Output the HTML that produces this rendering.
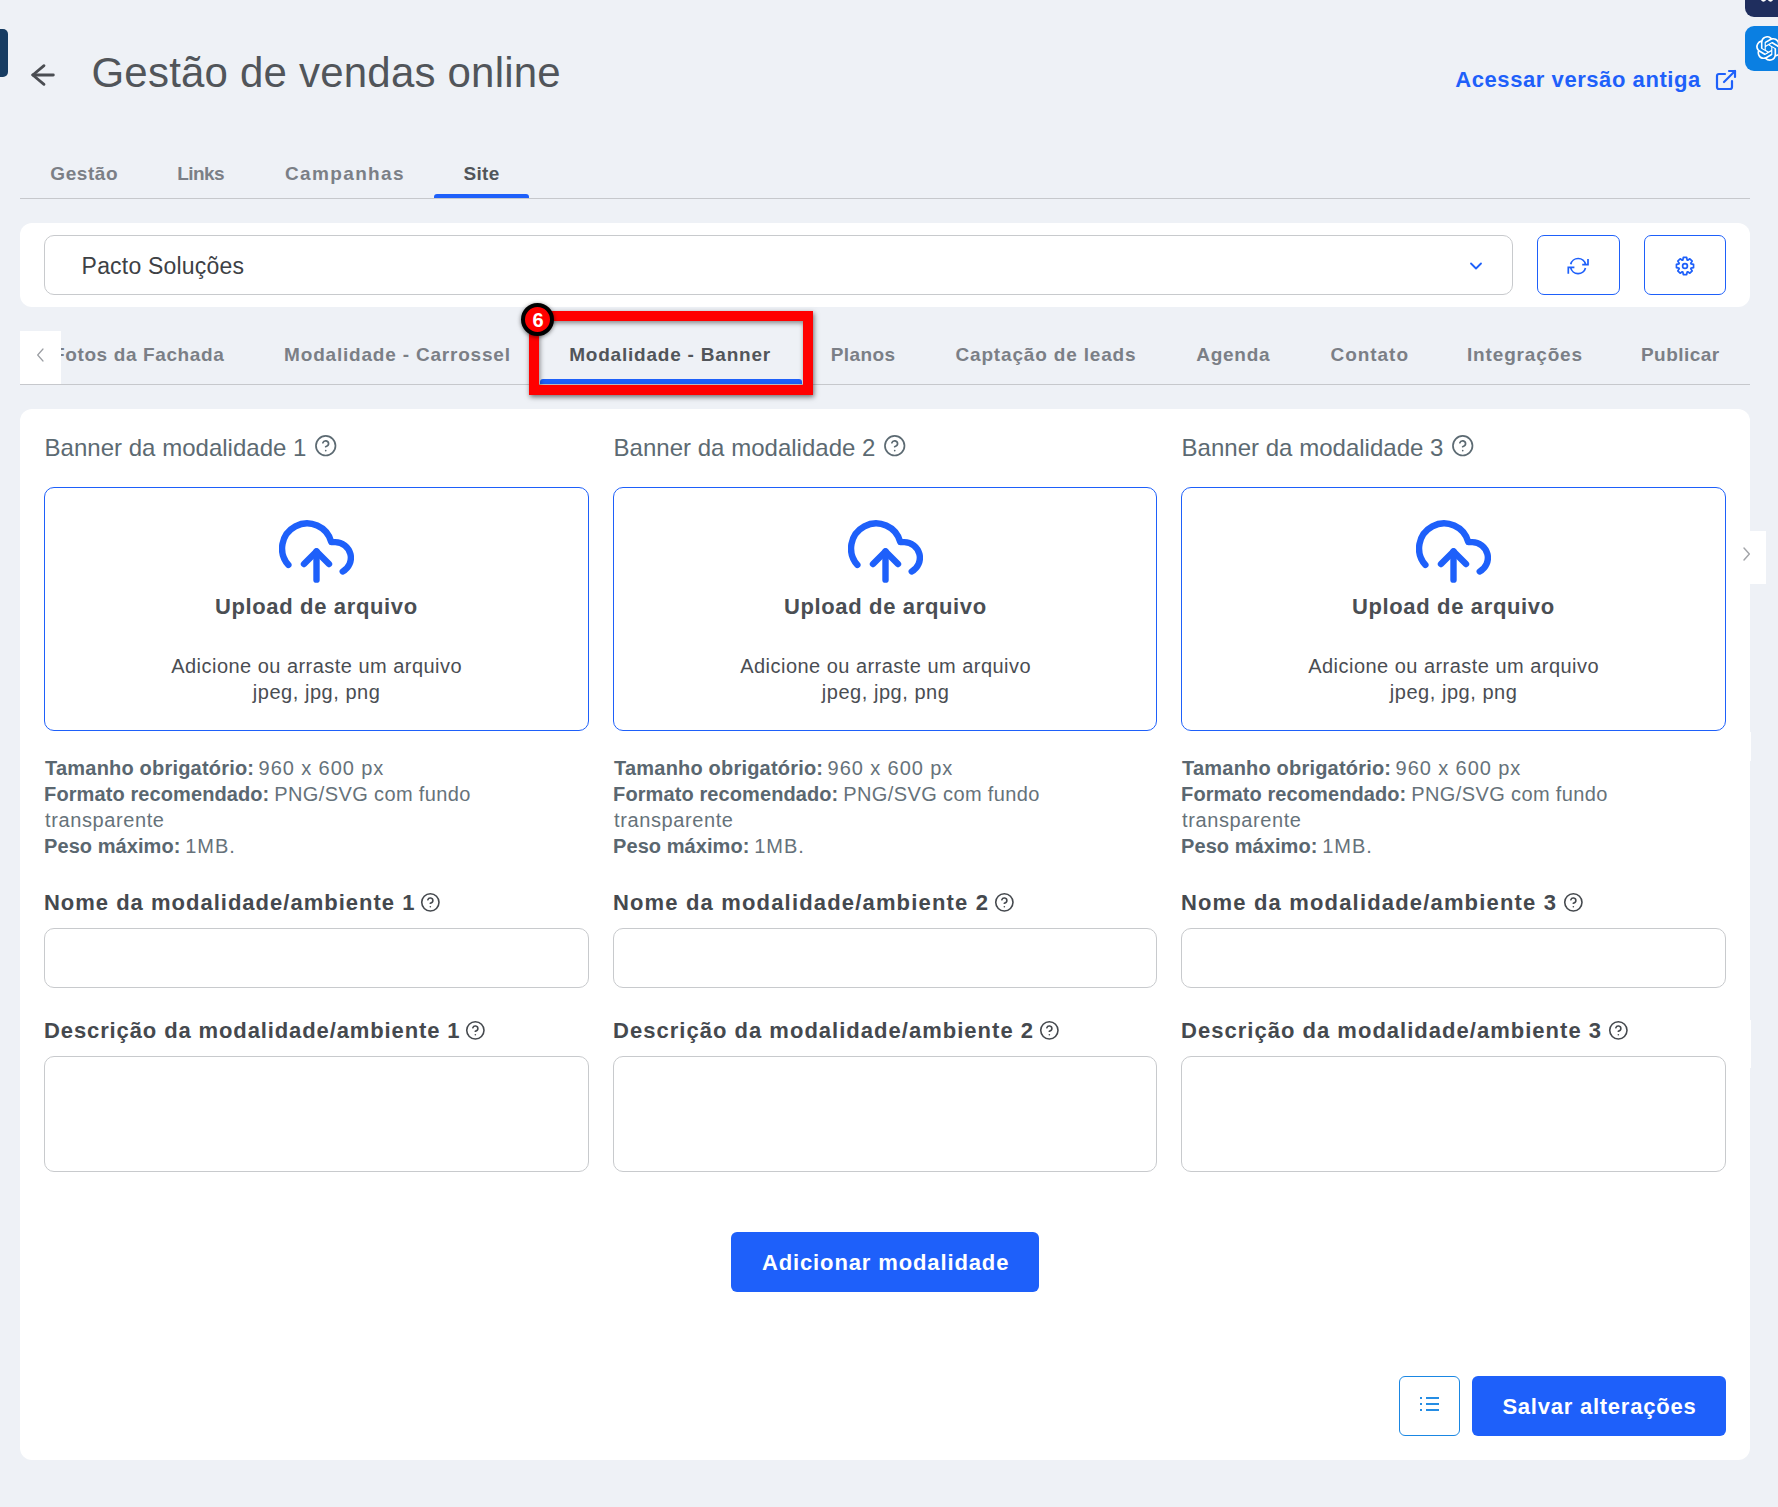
<!DOCTYPE html>
<html><head><meta charset="utf-8"><title>Gestão de vendas online</title>
<style>
html,body{margin:0;padding:0;}
body{width:1778px;height:1507px;overflow:hidden;background:#eef1f6;position:relative;font-family:"Liberation Sans",sans-serif;}
.a{position:absolute;box-sizing:content-box;}
.t{position:absolute;white-space:nowrap;line-height:1;font-family:"Liberation Sans",sans-serif;z-index:1}
</style></head><body>
<div class="a" style="left:-6px;top:29px;width:14px;height:48px;background:#173c62;border-radius:5px"></div>
<div class="a" style="left:1745px;top:-10px;width:50px;height:27px;background:#1f2e5e;border-radius:9px"></div>
<svg class="a" style="left:1759px;top:-6px" width="16" height="11" viewBox="0 0 16 11" fill="none" stroke="#fff" stroke-width="2.2" stroke-linecap="round"><path d="M2 1c0 5 2.5 8 5 3M14 1c0 5-2.5 8-5 3M7 4c.5 1 1.5 1 2 0"/></svg>
<div class="a" style="left:1745px;top:26px;width:50px;height:45px;background:#0a7fe2;border-radius:9px"></div>
<svg class="a" style="left:1755.5px;top:35.5px" width="25" height="25" viewBox="0 0 24 24"><path fill="#fff" d="M22.2819 9.8211a5.9847 5.9847 0 0 0-.5157-4.9108 6.0462 6.0462 0 0 0-6.5098-2.9A6.0651 6.0651 0 0 0 4.9807 4.1818a5.9847 5.9847 0 0 0-3.9977 2.9 6.0462 6.0462 0 0 0 .7427 7.0966 5.98 5.98 0 0 0 .511 4.9107 6.051 6.051 0 0 0 6.5146 2.9001A5.9847 5.9847 0 0 0 13.2599 24a6.0557 6.0557 0 0 0 5.7718-4.2058 5.9894 5.9894 0 0 0 3.9977-2.9001 6.0557 6.0557 0 0 0-.7475-7.0729zm-9.022 12.6081a4.4755 4.4755 0 0 1-2.8764-1.0408l.1419-.0804 4.7783-2.7582a.7948.7948 0 0 0 .3927-.6813v-6.7369l2.02 1.1686a.071.071 0 0 1 .038.052v5.5826a4.504 4.504 0 0 1-4.4945 4.4944zm-9.6607-4.1254a4.4708 4.4708 0 0 1-.5346-3.0137l.142.0852 4.783 2.7582a.7712.7712 0 0 0 .7806 0l5.8428-3.3685v2.3324a.0804.0804 0 0 1-.0332.0615L9.74 19.9502a4.4992 4.4992 0 0 1-6.1408-1.6464zM2.3408 7.8956a4.485 4.485 0 0 1 2.3655-1.9728V11.6a.7664.7664 0 0 0 .3879.6765l5.8144 3.3543-2.0201 1.1685a.0757.0757 0 0 1-.071 0l-4.8303-2.7865A4.504 4.504 0 0 1 2.3408 7.872zm16.5963 3.8558L13.1038 8.364 15.1192 7.2a.0757.0757 0 0 1 .071 0l4.8303 2.7913a4.4944 4.4944 0 0 1-.6765 8.1042v-5.6772a.79.79 0 0 0-.407-.667zm2.0107-3.0231l-.142-.0852-4.7735-2.7818a.7759.7759 0 0 0-.7854 0L9.409 9.2297V6.8974a.0662.0662 0 0 1 .0284-.0615l4.8303-2.7866a4.4992 4.4992 0 0 1 6.6802 4.66zM8.3065 12.863l-2.02-1.1638a.0804.0804 0 0 1-.038-.0567V6.0742a4.4992 4.4992 0 0 1 7.3757-3.4537l-.142.0805L8.704 5.459a.7948.7948 0 0 0-.3927.6813zm1.0976-2.3654l2.602-1.4998 2.6069 1.4998v2.9994l-2.5974 1.4997-2.6067-1.4997Z"/></svg>
<svg class="a" style="left:27.5px;top:58.5px" width="32" height="32" viewBox="0 0 24 24" fill="none" stroke="#4a4d52" stroke-width="2.1" stroke-linecap="round" stroke-linejoin="round"><line x1="19" y1="12" x2="3.6" y2="12"/><polyline points="12 19 3.6 12 12 5"/></svg>
<svg class="a" style="left:1714px;top:68px" width="24" height="24" viewBox="0 0 24 24" fill="none" stroke="#1e60fa" stroke-width="2.2" stroke-linecap="round" stroke-linejoin="round"><path d="M18 13v6a2 2 0 0 1-2 2H5a2 2 0 0 1-2-2V8a2 2 0 0 1 2-2h6"/><polyline points="15 3 21 3 21 9"/><line x1="10" y1="14" x2="21" y2="3"/></svg>
<div class="a" style="left:20px;top:198px;width:1730px;height:1px;background:#c6c8cc"></div>
<div class="a" style="left:434px;top:194px;width:95px;height:4px;background:#1e60fa;border-radius:3px 3px 0 0"></div>
<div class="a" style="left:20px;top:223px;width:1730px;height:84px;background:#fff;border-radius:12px"></div>
<div class="a" style="left:44px;top:235px;width:1467px;height:58px;border:1px solid #c8cacd;border-radius:10px;background:#fff"></div>
<svg class="a" style="left:1466px;top:256px" width="20" height="20" viewBox="0 0 24 24" fill="none" stroke="#1e60fa" stroke-width="2.2" stroke-linecap="round" stroke-linejoin="round"><polyline points="6 9 12 15 18 9"/></svg>
<div class="a" style="left:1537px;top:235px;width:81px;height:58px;border:1px solid #1e60fa;border-radius:7px"></div>
<div class="a" style="left:1644px;top:235px;width:80px;height:58px;border:1px solid #1e60fa;border-radius:7px"></div>
<svg class="a" style="left:1560px;top:250px" width="40" height="32" viewBox="0 0 40 32" fill="none" stroke="#1e60fa" stroke-width="1.7" stroke-linecap="butt" stroke-linejoin="miter"><path d="M10.73 14.26A7.6 7.6 0 0 1 25.53 14.52"/><polyline points="28 8.9 28 14.6 22.2 14.6"/><path d="M25.47 17.94A7.6 7.6 0 0 1 10.67 17.68"/><polyline points="8.3 23.7 8.3 17.3 14.4 17.3"/></svg>
<svg class="a" style="left:1673px;top:254.1px" width="24" height="24" viewBox="0 0 24 24" fill="none" stroke="#1e60fa" stroke-width="1.7" stroke-linecap="round" stroke-linejoin="round"><circle cx="12" cy="12" r="2.4"/><path d="M9.86 5.97 L10.34 3.46 L13.66 3.46 L14.14 5.97 L14.76 6.22 L16.86 4.79 L19.21 7.14 L17.78 9.24 L18.03 9.86 L20.54 10.34 L20.54 13.66 L18.03 14.14 L17.78 14.76 L19.21 16.86 L16.86 19.21 L14.76 17.78 L14.14 18.03 L13.66 20.54 L10.34 20.54 L9.86 18.03 L9.24 17.78 L7.14 19.21 L4.79 16.86 L6.22 14.76 L5.97 14.14 L3.46 13.66 L3.46 10.34 L5.97 9.86 L6.22 9.24 L4.79 7.14 L7.14 4.79 L9.24 6.22Z"/></svg>
<div class="a" style="left:20px;top:384px;width:1730px;height:1px;background:#c6c8cc"></div>
<div class="a" style="left:540px;top:379px;width:262px;height:5px;background:#1e60fa;border-radius:3px 3px 0 0"></div>
<div class="a" style="left:0px;top:330px;width:61px;height:54px;background:#eef1f6;z-index:2"></div>
<div class="a" style="left:20px;top:331px;width:41px;height:53px;background:#fff;z-index:2"></div>
<svg class="a" style="left:33px;top:347px;z-index:3" width="16" height="16" viewBox="0 0 24 24" fill="none" stroke="#9b9ea3" stroke-width="1.8" stroke-linecap="round" stroke-linejoin="round"><polyline points="15 3 7 12 15 21"/></svg>
<div class="a" style="left:529px;top:311px;width:264px;height:64px;border:10px solid #ff0000;box-shadow:1px 2px 5px rgba(0,0,0,.55), inset 1px 2px 5px rgba(0,0,0,.45);z-index:4"></div>
<div class="a" style="left:521px;top:303px;width:25px;height:25px;border:4px solid #000;background:#ff0000;border-radius:50%;z-index:5;box-shadow:0 1px 4px rgba(0,0,0,.55)"></div>
<div class="t" style="left:532.5px;top:310px;font-size:20px;font-weight:700;color:#fff;z-index:6;letter-spacing:0">6</div>
<div class="a" style="left:20px;top:409px;width:1730px;height:1051px;background:#fff;border-radius:12px"></div>
<div class="a" style="left:1750px;top:732px;width:1px;height:29px;background:#fff"></div>
<div class="a" style="left:1750px;top:1020px;width:1px;height:48px;background:#fff"></div>
<div class="a" style="left:1750px;top:531px;width:16px;height:53px;background:#fff"></div>
<svg class="a" style="left:1738px;top:546px" width="16" height="16" viewBox="0 0 24 24" fill="none" stroke="#a3a5a9" stroke-width="2.2" stroke-linecap="round" stroke-linejoin="round"><polyline points="9 3 17 12 9 21"/></svg>
<svg class="a" style="left:314.07px;top:434.27px" width="23.45" height="23.45" viewBox="0 0 24 24" fill="none" stroke="#5c6a72" stroke-width="1.74" stroke-linecap="round" stroke-linejoin="round"><circle cx="12" cy="12" r="10"/><path d="M9.09 9a3 3 0 0 1 5.83 1c0 2-3 3-3 3"/><line x1="12" y1="17" x2="12.01" y2="17"/></svg>
<div class="a" style="left:44px;top:487px;width:543px;height:242px;border:1px solid #1e60fa;border-radius:10px"></div>
<svg class="a" style="left:279px;top:513.7px" width="75" height="75" viewBox="0 0 24 24" fill="none" stroke="#1e60fa" stroke-width="2.05" stroke-linecap="round" stroke-linejoin="round"><polyline points="16 16 12 12 8 16"/><line x1="12" y1="12" x2="12" y2="21"/><path d="M20.39 18.39A5 5 0 0 0 18 9h-1.26A8 8 0 1 0 3 16.3"/></svg>
<svg class="a" style="left:420.34px;top:891.64px" width="20.73" height="20.73" viewBox="0 0 24 24" fill="none" stroke="#45494e" stroke-width="1.85" stroke-linecap="round" stroke-linejoin="round"><circle cx="12" cy="12" r="10"/><path d="M9.09 9a3 3 0 0 1 5.83 1c0 2-3 3-3 3"/><line x1="12" y1="17" x2="12.01" y2="17"/></svg>
<div class="a" style="left:44px;top:928px;width:543px;height:58px;border:1px solid #c8cacd;border-radius:10px"></div>
<svg class="a" style="left:465.04px;top:1020.24px" width="20.73" height="20.73" viewBox="0 0 24 24" fill="none" stroke="#45494e" stroke-width="1.85" stroke-linecap="round" stroke-linejoin="round"><circle cx="12" cy="12" r="10"/><path d="M9.09 9a3 3 0 0 1 5.83 1c0 2-3 3-3 3"/><line x1="12" y1="17" x2="12.01" y2="17"/></svg>
<div class="a" style="left:44px;top:1056px;width:543px;height:114px;border:1px solid #c8cacd;border-radius:10px"></div>
<svg class="a" style="left:883.07px;top:434.27px" width="23.45" height="23.45" viewBox="0 0 24 24" fill="none" stroke="#5c6a72" stroke-width="1.74" stroke-linecap="round" stroke-linejoin="round"><circle cx="12" cy="12" r="10"/><path d="M9.09 9a3 3 0 0 1 5.83 1c0 2-3 3-3 3"/><line x1="12" y1="17" x2="12.01" y2="17"/></svg>
<div class="a" style="left:613px;top:487px;width:542px;height:242px;border:1px solid #1e60fa;border-radius:10px"></div>
<svg class="a" style="left:848px;top:513.7px" width="75" height="75" viewBox="0 0 24 24" fill="none" stroke="#1e60fa" stroke-width="2.05" stroke-linecap="round" stroke-linejoin="round"><polyline points="16 16 12 12 8 16"/><line x1="12" y1="12" x2="12" y2="21"/><path d="M20.39 18.39A5 5 0 0 0 18 9h-1.26A8 8 0 1 0 3 16.3"/></svg>
<svg class="a" style="left:993.94px;top:891.64px" width="20.73" height="20.73" viewBox="0 0 24 24" fill="none" stroke="#45494e" stroke-width="1.85" stroke-linecap="round" stroke-linejoin="round"><circle cx="12" cy="12" r="10"/><path d="M9.09 9a3 3 0 0 1 5.83 1c0 2-3 3-3 3"/><line x1="12" y1="17" x2="12.01" y2="17"/></svg>
<div class="a" style="left:613px;top:928px;width:542px;height:58px;border:1px solid #c8cacd;border-radius:10px"></div>
<svg class="a" style="left:1038.64px;top:1020.24px" width="20.73" height="20.73" viewBox="0 0 24 24" fill="none" stroke="#45494e" stroke-width="1.85" stroke-linecap="round" stroke-linejoin="round"><circle cx="12" cy="12" r="10"/><path d="M9.09 9a3 3 0 0 1 5.83 1c0 2-3 3-3 3"/><line x1="12" y1="17" x2="12.01" y2="17"/></svg>
<div class="a" style="left:613px;top:1056px;width:542px;height:114px;border:1px solid #c8cacd;border-radius:10px"></div>
<svg class="a" style="left:1451.07px;top:434.27px" width="23.45" height="23.45" viewBox="0 0 24 24" fill="none" stroke="#5c6a72" stroke-width="1.74" stroke-linecap="round" stroke-linejoin="round"><circle cx="12" cy="12" r="10"/><path d="M9.09 9a3 3 0 0 1 5.83 1c0 2-3 3-3 3"/><line x1="12" y1="17" x2="12.01" y2="17"/></svg>
<div class="a" style="left:1181px;top:487px;width:543px;height:242px;border:1px solid #1e60fa;border-radius:10px"></div>
<svg class="a" style="left:1416px;top:513.7px" width="75" height="75" viewBox="0 0 24 24" fill="none" stroke="#1e60fa" stroke-width="2.05" stroke-linecap="round" stroke-linejoin="round"><polyline points="16 16 12 12 8 16"/><line x1="12" y1="12" x2="12" y2="21"/><path d="M20.39 18.39A5 5 0 0 0 18 9h-1.26A8 8 0 1 0 3 16.3"/></svg>
<svg class="a" style="left:1563.44px;top:891.64px" width="20.73" height="20.73" viewBox="0 0 24 24" fill="none" stroke="#45494e" stroke-width="1.85" stroke-linecap="round" stroke-linejoin="round"><circle cx="12" cy="12" r="10"/><path d="M9.09 9a3 3 0 0 1 5.83 1c0 2-3 3-3 3"/><line x1="12" y1="17" x2="12.01" y2="17"/></svg>
<div class="a" style="left:1181px;top:928px;width:543px;height:58px;border:1px solid #c8cacd;border-radius:10px"></div>
<svg class="a" style="left:1608.14px;top:1020.24px" width="20.73" height="20.73" viewBox="0 0 24 24" fill="none" stroke="#45494e" stroke-width="1.85" stroke-linecap="round" stroke-linejoin="round"><circle cx="12" cy="12" r="10"/><path d="M9.09 9a3 3 0 0 1 5.83 1c0 2-3 3-3 3"/><line x1="12" y1="17" x2="12.01" y2="17"/></svg>
<div class="a" style="left:1181px;top:1056px;width:543px;height:114px;border:1px solid #c8cacd;border-radius:10px"></div>
<div class="a" style="left:731px;top:1232px;width:308px;height:60px;background:#1e60fa;border-radius:6px;z-index:2"></div>
<div class="a" style="left:1399px;top:1376px;width:59px;height:58px;border:1px solid #1a87e3;border-radius:6px"></div>
<svg class="a" style="left:1418.3px;top:1392px" width="24" height="24" viewBox="0 0 24 24" fill="none" stroke="#1a87e3" stroke-width="1.9" stroke-linecap="butt"><line x1="8" y1="6" x2="21" y2="6"/><line x1="8" y1="12" x2="21" y2="12"/><line x1="8" y1="18" x2="21" y2="18"/><line x1="3" y1="5" x2="3" y2="7"/><line x1="3" y1="11" x2="3" y2="13"/><line x1="3" y1="17" x2="3" y2="19"/></svg>
<div class="a" style="left:1472px;top:1376px;width:254px;height:60px;background:#1e60fa;border-radius:6px;z-index:2"></div>
<div class="t" style="left:91.50px;top:51.90px;font-size:42px;font-weight:400;letter-spacing:0.204px;color:#51555a;z-index:1">Gestão de vendas online</div>
<div class="t" style="left:1455.30px;top:68.60px;font-size:22px;font-weight:700;letter-spacing:0.568px;color:#1e60fa;z-index:1">Acessar versão antiga</div>
<div class="t" style="left:50.30px;top:163.75px;font-size:19px;font-weight:700;letter-spacing:0.579px;color:#7b7f86;z-index:1">Gestão</div>
<div class="t" style="left:177.20px;top:163.75px;font-size:19px;font-weight:700;letter-spacing:-0.539px;color:#7b7f86;z-index:1">Links</div>
<div class="t" style="left:285.00px;top:163.75px;font-size:19px;font-weight:700;letter-spacing:1.358px;color:#7b7f86;z-index:1">Campanhas</div>
<div class="t" style="left:463.50px;top:163.75px;font-size:19px;font-weight:700;letter-spacing:0.307px;color:#51555a;z-index:1">Site</div>
<div class="t" style="left:81.60px;top:254.65px;font-size:23px;font-weight:400;letter-spacing:0.198px;color:#3d4145;z-index:1">Pacto Soluções</div>
<div class="t" style="left:53.00px;top:344.65px;font-size:19px;font-weight:700;letter-spacing:0.616px;color:#7b7f86;z-index:1">Fotos da Fachada</div>
<div class="t" style="left:284.10px;top:344.65px;font-size:19px;font-weight:700;letter-spacing:0.801px;color:#7b7f86;z-index:1">Modalidade - Carrossel</div>
<div class="t" style="left:569.20px;top:344.65px;font-size:19px;font-weight:700;letter-spacing:0.786px;color:#51555a;z-index:1">Modalidade - Banner</div>
<div class="t" style="left:830.80px;top:344.65px;font-size:19px;font-weight:700;letter-spacing:0.394px;color:#7b7f86;z-index:1">Planos</div>
<div class="t" style="left:955.50px;top:344.65px;font-size:19px;font-weight:700;letter-spacing:0.826px;color:#7b7f86;z-index:1">Captação de leads</div>
<div class="t" style="left:1196.30px;top:344.65px;font-size:19px;font-weight:700;letter-spacing:0.719px;color:#7b7f86;z-index:1">Agenda</div>
<div class="t" style="left:1330.50px;top:344.65px;font-size:19px;font-weight:700;letter-spacing:0.958px;color:#7b7f86;z-index:1">Contato</div>
<div class="t" style="left:1467.00px;top:344.65px;font-size:19px;font-weight:700;letter-spacing:0.841px;color:#7b7f86;z-index:1">Integrações</div>
<div class="t" style="left:1641.00px;top:344.65px;font-size:19px;font-weight:700;letter-spacing:0.446px;color:#7b7f86;z-index:1">Publicar</div>
<div class="t" style="left:44.60px;top:436.20px;font-size:24px;font-weight:400;letter-spacing:0.015px;color:#5c6a72;z-index:1">Banner da modalidade 1</div>
<div class="t" style="left:214.90px;top:596.30px;font-size:22px;font-weight:700;letter-spacing:0.646px;color:#4a4e53;z-index:1">Upload de arquivo</div>
<div class="t" style="left:171.20px;top:655.90px;font-size:20px;font-weight:400;letter-spacing:0.469px;color:#4a4d52;z-index:1">Adicione ou arraste um arquivo</div>
<div class="t" style="left:252.80px;top:682.00px;font-size:20px;font-weight:400;letter-spacing:0.533px;color:#4a4d52;z-index:1">jpeg, jpg, png</div>
<div class="t" style="left:45.10px;top:757.60px;font-size:20px;font-weight:700;letter-spacing:0.194px;color:#5a6770;z-index:1">Tamanho obrigatório:</div>
<div class="t" style="left:258.60px;top:757.60px;font-size:20px;font-weight:400;letter-spacing:0.924px;color:#66727a;z-index:1">960 x 600 px</div>
<div class="t" style="left:44.10px;top:783.60px;font-size:20px;font-weight:700;letter-spacing:0.095px;color:#5a6770;z-index:1">Formato recomendado:</div>
<div class="t" style="left:274.30px;top:783.60px;font-size:20px;font-weight:400;letter-spacing:0.378px;color:#66727a;z-index:1">PNG/SVG com fundo</div>
<div class="t" style="left:45.10px;top:809.70px;font-size:20px;font-weight:400;letter-spacing:0.593px;color:#66727a;z-index:1">transparente</div>
<div class="t" style="left:44.10px;top:835.60px;font-size:20px;font-weight:700;letter-spacing:0.060px;color:#5a6770;z-index:1">Peso máximo:</div>
<div class="t" style="left:185.30px;top:835.60px;font-size:20px;font-weight:400;letter-spacing:0.926px;color:#66727a;z-index:1">1MB.</div>
<div class="t" style="left:43.90px;top:891.50px;font-size:22px;font-weight:700;letter-spacing:1.008px;color:#45494e;z-index:1">Nome da modalidade/ambiente 1</div>
<div class="t" style="left:44.00px;top:1020.10px;font-size:22px;font-weight:700;letter-spacing:0.884px;color:#45494e;z-index:1">Descrição da modalidade/ambiente 1</div>
<div class="t" style="left:613.60px;top:436.20px;font-size:24px;font-weight:400;letter-spacing:0.015px;color:#5c6a72;z-index:1">Banner da modalidade 2</div>
<div class="t" style="left:783.90px;top:596.30px;font-size:22px;font-weight:700;letter-spacing:0.646px;color:#4a4e53;z-index:1">Upload de arquivo</div>
<div class="t" style="left:740.20px;top:655.90px;font-size:20px;font-weight:400;letter-spacing:0.469px;color:#4a4d52;z-index:1">Adicione ou arraste um arquivo</div>
<div class="t" style="left:821.80px;top:682.00px;font-size:20px;font-weight:400;letter-spacing:0.533px;color:#4a4d52;z-index:1">jpeg, jpg, png</div>
<div class="t" style="left:614.10px;top:757.60px;font-size:20px;font-weight:700;letter-spacing:0.194px;color:#5a6770;z-index:1">Tamanho obrigatório:</div>
<div class="t" style="left:827.60px;top:757.60px;font-size:20px;font-weight:400;letter-spacing:0.924px;color:#66727a;z-index:1">960 x 600 px</div>
<div class="t" style="left:613.10px;top:783.60px;font-size:20px;font-weight:700;letter-spacing:0.095px;color:#5a6770;z-index:1">Formato recomendado:</div>
<div class="t" style="left:843.30px;top:783.60px;font-size:20px;font-weight:400;letter-spacing:0.378px;color:#66727a;z-index:1">PNG/SVG com fundo</div>
<div class="t" style="left:614.10px;top:809.70px;font-size:20px;font-weight:400;letter-spacing:0.593px;color:#66727a;z-index:1">transparente</div>
<div class="t" style="left:613.10px;top:835.60px;font-size:20px;font-weight:700;letter-spacing:0.060px;color:#5a6770;z-index:1">Peso máximo:</div>
<div class="t" style="left:754.30px;top:835.60px;font-size:20px;font-weight:400;letter-spacing:0.926px;color:#66727a;z-index:1">1MB.</div>
<div class="t" style="left:612.90px;top:891.50px;font-size:22px;font-weight:700;letter-spacing:1.169px;color:#45494e;z-index:1">Nome da modalidade/ambiente 2</div>
<div class="t" style="left:613.00px;top:1020.10px;font-size:22px;font-weight:700;letter-spacing:1.020px;color:#45494e;z-index:1">Descrição da modalidade/ambiente 2</div>
<div class="t" style="left:1181.60px;top:436.20px;font-size:24px;font-weight:400;letter-spacing:0.015px;color:#5c6a72;z-index:1">Banner da modalidade 3</div>
<div class="t" style="left:1351.90px;top:596.30px;font-size:22px;font-weight:700;letter-spacing:0.646px;color:#4a4e53;z-index:1">Upload de arquivo</div>
<div class="t" style="left:1308.20px;top:655.90px;font-size:20px;font-weight:400;letter-spacing:0.469px;color:#4a4d52;z-index:1">Adicione ou arraste um arquivo</div>
<div class="t" style="left:1389.80px;top:682.00px;font-size:20px;font-weight:400;letter-spacing:0.533px;color:#4a4d52;z-index:1">jpeg, jpg, png</div>
<div class="t" style="left:1182.10px;top:757.60px;font-size:20px;font-weight:700;letter-spacing:0.194px;color:#5a6770;z-index:1">Tamanho obrigatório:</div>
<div class="t" style="left:1395.60px;top:757.60px;font-size:20px;font-weight:400;letter-spacing:0.924px;color:#66727a;z-index:1">960 x 600 px</div>
<div class="t" style="left:1181.10px;top:783.60px;font-size:20px;font-weight:700;letter-spacing:0.095px;color:#5a6770;z-index:1">Formato recomendado:</div>
<div class="t" style="left:1411.30px;top:783.60px;font-size:20px;font-weight:400;letter-spacing:0.378px;color:#66727a;z-index:1">PNG/SVG com fundo</div>
<div class="t" style="left:1182.10px;top:809.70px;font-size:20px;font-weight:400;letter-spacing:0.593px;color:#66727a;z-index:1">transparente</div>
<div class="t" style="left:1181.10px;top:835.60px;font-size:20px;font-weight:700;letter-spacing:0.060px;color:#5a6770;z-index:1">Peso máximo:</div>
<div class="t" style="left:1322.30px;top:835.60px;font-size:20px;font-weight:400;letter-spacing:0.926px;color:#66727a;z-index:1">1MB.</div>
<div class="t" style="left:1180.90px;top:891.50px;font-size:22px;font-weight:700;letter-spacing:1.169px;color:#45494e;z-index:1">Nome da modalidade/ambiente 3</div>
<div class="t" style="left:1181.00px;top:1020.10px;font-size:22px;font-weight:700;letter-spacing:1.020px;color:#45494e;z-index:1">Descrição da modalidade/ambiente 3</div>
<div class="t" style="left:761.90px;top:1251.50px;font-size:22px;font-weight:700;letter-spacing:0.880px;color:#ffffff;z-index:3">Adicionar modalidade</div>
<div class="t" style="left:1502.40px;top:1395.90px;font-size:22px;font-weight:700;letter-spacing:0.764px;color:#ffffff;z-index:3">Salvar alterações</div>
</body></html>
